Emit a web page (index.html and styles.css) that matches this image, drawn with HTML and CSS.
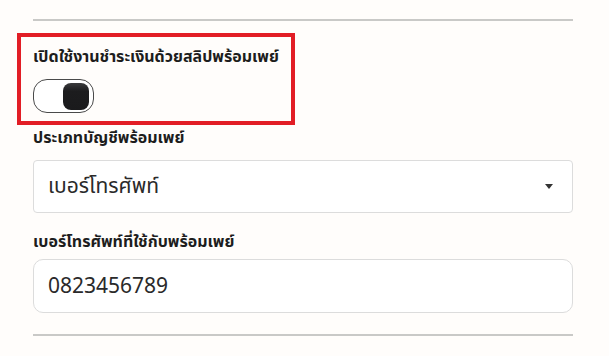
FILE: index.html
```html
<!DOCTYPE html>
<html lang="th">
<head>
  <meta charset="UTF-8" />
  <meta name="viewport" content="width=device-width, initial-scale=1.0"/>
  <title>PromptPay Settings</title>
  <link rel="stylesheet" href="styles.css">
</head>
<body>
  <div class="settings">
    <hr class="divider">
    <div class="highlight-box">
      <label class="field-label" for="pp-toggle">เปิดใช้งานชำระเงินด้วยสลิปพร้อมเพย์</label>
      <button class="toggle on" id="pp-toggle" type="button"><span class="knob"></span></button>
    </div>
    <div class="field">
      <label class="field-label" for="pp-type">ประเภทบัญชีพร้อมเพย์</label>
      <div class="select-box" id="pp-type">
        <span class="select-value">เบอร์โทรศัพท์</span>
        <span class="caret"></span>
      </div>
    </div>
    <div class="field">
      <label class="field-label" for="pp-phone">เบอร์โทรศัพท์ที่ใช้กับพร้อมเพย์</label>
      <input class="text-input" id="pp-phone" type="text" value="0823456789">
    </div>
    <hr class="divider bottom">
  </div>
  <script>
    // Toggle switch
    document.getElementById('pp-toggle').onclick = function() {
      this.classList.toggle('on');
    };
  </script>
</body>
</html>
```

FILE: styles.css
```css
body {
  margin: 0;
  background: #fffdfb;
  font-family: "Noto Sans Thai", "Noto Sans", "DejaVu Sans", sans-serif;
  color: #222;
}
.settings {
  width: 540px;
  margin-left: 33px;
  padding-top: 19px;
}
.divider {
  border: none;
  border-top: 2px solid #c9c9c7;
  margin: 0;
}
.divider.bottom {
  margin-top: 21px;
}
.highlight-box {
  display: inline-block;
  margin-top: 12px;
  margin-left: -16px;
  border: 4px solid #e21d25;
  padding: 9px 12px 8px 12px;
}
.field-label {
  display: block;
  font-size: 16px;
  font-weight: 700;
  line-height: 22px;
  color: #1d1d1d;
}
.toggle {
  display: flex;
  align-items: center;
  width: 61px;
  height: 34px;
  margin-top: 11px;
  padding: 0 4px;
  border: 1px solid #4a4a4a;
  border-radius: 14px;
  background: #fff;
  cursor: pointer;
}
.toggle.on {
  justify-content: flex-end;
}
.knob {
  width: 26px;
  height: 27px;
  border-radius: 8px;
  background: linear-gradient(#3a3a3c 0, #1c1c1e 30%, #1a1a1c 100%);
}
.field {
  margin-top: 2px;
}
.field + .field {
  margin-top: 18px;
}
.select-box,
.text-input {
  display: flex;
  align-items: center;
  box-sizing: border-box;
  width: 540px;
  height: 53px;
  margin-top: 11px;
  padding: 0 14px;
  border: 1px solid #dcdcdc;
  border-radius: 4px;
  background: #fff;
  font-family: inherit;
  font-size: 21px;
  color: #2a2a2a;
}
.text-input {
  height: 54px;
  margin-top: 6px;
  border-radius: 10px;
  outline: none;
}
.select-value {
  flex: 1;
}
.caret {
  width: 0;
  height: 0;
  margin-right: 5px;
  border-left: 4px solid transparent;
  border-right: 4px solid transparent;
  border-top: 5px solid #333;
}
```
